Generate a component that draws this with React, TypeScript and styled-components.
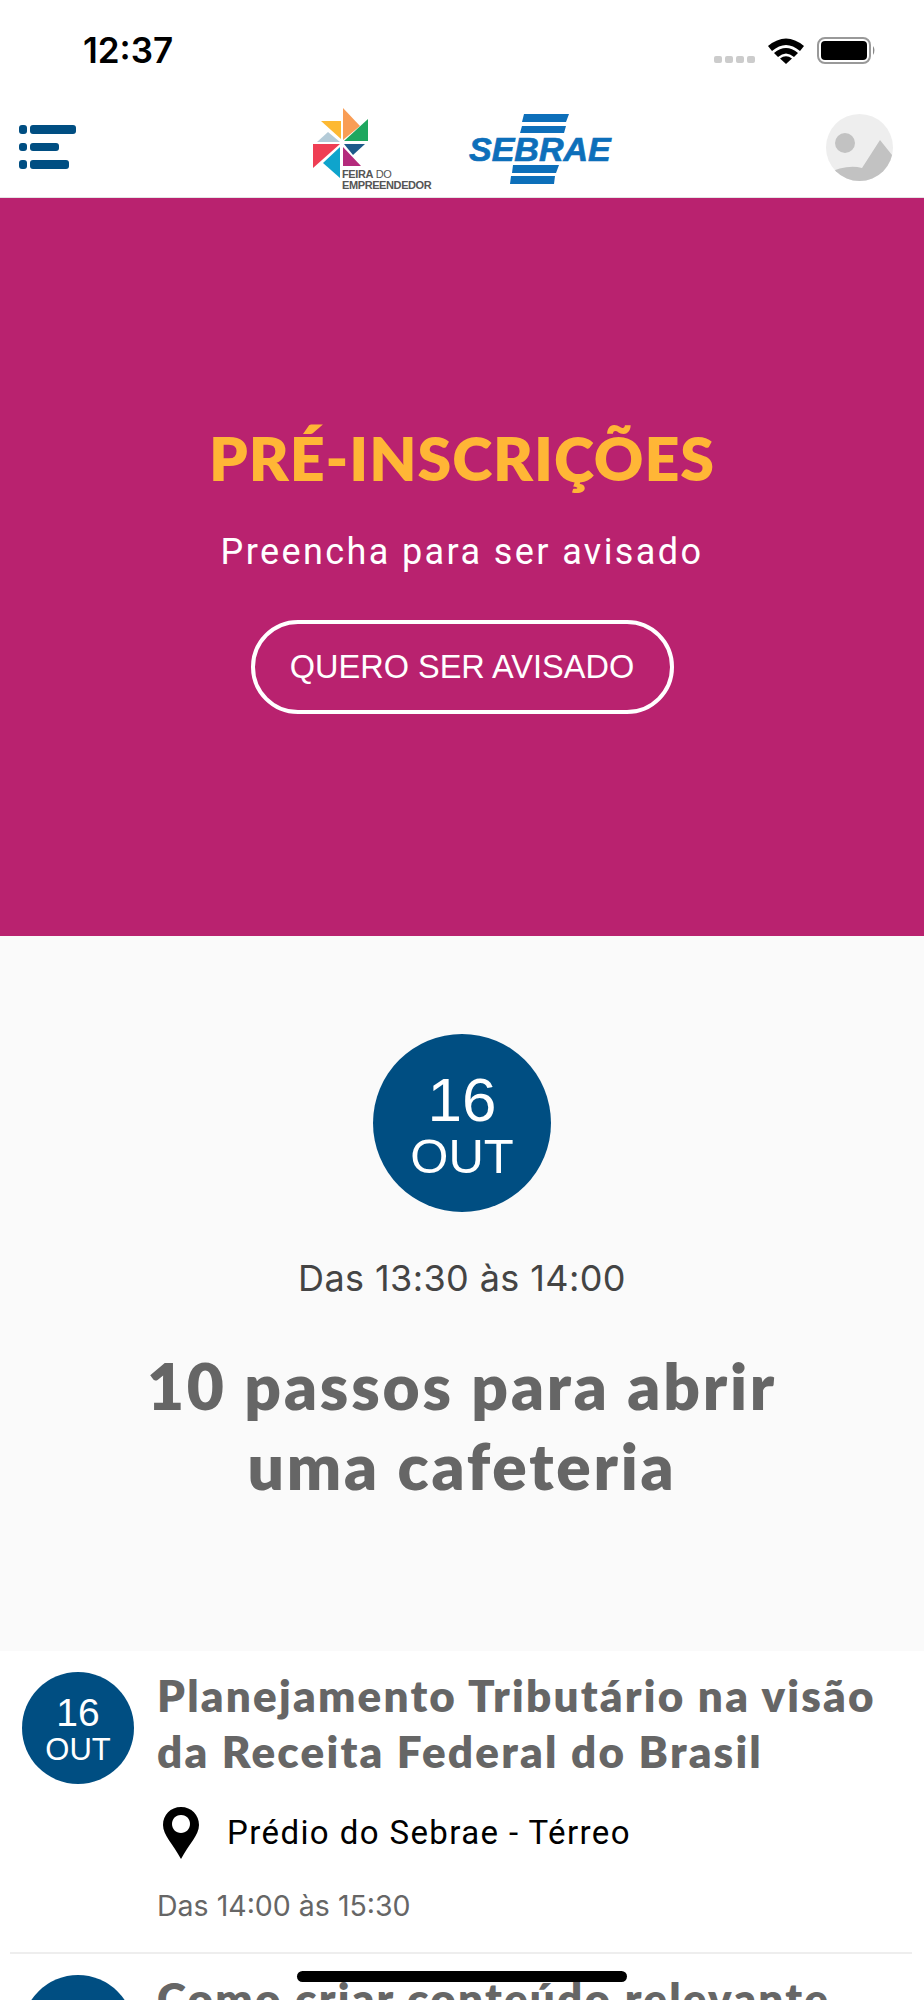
import React from 'react'
import styled, { createGlobalStyle } from "styled-components"

const Global = createGlobalStyle`
    html, body {
        margin:0;
        padding:0;
        background:#fff;
    }
`
const Page = styled.div`
    position:relative;
    width:924px;
    height:2000px;
    overflow:hidden;
    background:#fff;
`
const StatusBar = styled.div`
    height:97px;
    box-sizing:border-box;
    padding:32px 48px 0 83px;
    display:flex;
    justify-content:space-between;
    align-items:flex-start;
`
const Clock = styled.span`
    font-family:"Inter", sans-serif;
    font-size:35px;
    line-height:36px;
    font-weight:600;
    color:#000;
`
const StatusIcons = styled.div`
    display:flex;
    align-items:center;
    margin-top:5px;
`
const Header = styled.header`
    height:101px;
    box-sizing:border-box;
    border-bottom:1px solid #e4e4e4;
    padding:0 31px 0 19px;
    display:flex;
    align-items:center;
    justify-content:space-between;
`
const Logos = styled.div`
    display:flex;
    align-items:center;
    gap:35px;
    margin-left:29px;
    margin-top:5px;
`
const Hero = styled.section`
    height:738px;
    box-sizing:border-box;
    background:#B9226F;
    padding-top:224px;
    display:flex;
    flex-direction:column;
    align-items:center;
`
const HeroTitle = styled.h1`
    margin:0;
    font-family:"Lato", sans-serif;
    font-size:61px;
    line-height:72px;
    font-weight:800;
    letter-spacing:0.9px;
    color:#FFB636;
`
const HeroText = styled.p`
    margin:36px 0 0;
    font-family:"Roboto", sans-serif;
    font-size:36px;
    line-height:44px;
    letter-spacing:2.4px;
    color:#fff;
`
const HeroButton = styled.button`
    margin-top:46px;
    width:423px;
    height:94px;
    box-sizing:border-box;
    border:4px solid #fff;
    border-radius:47px;
    background:transparent;
    color:#fff;
    font-family:"Liberation Sans", sans-serif;
    font-size:32.5px;
    padding:0;
`
const Featured = styled.section`
    height:715px;
    box-sizing:border-box;
    background:#FAFAFA;
    padding-top:98px;
    display:flex;
    flex-direction:column;
    align-items:center;
`
const DateBadge = styled.div<{ small?: boolean }>`
    flex:none;
    width:${(props) => props.small ? "112px" : "178px"};
    height:${(props) => props.small ? "112px" : "178px"};
    box-sizing:border-box;
    padding-top:${(props) => props.small ? "1px" : "5px"};
    border-radius:50%;
    background:#004E82;
    color:#fff;
    font-family:"Liberation Sans", sans-serif;
    display:flex;
    flex-direction:column;
    align-items:center;
    justify-content:center;
`
const BadgeDay = styled.span<{ small?: boolean }>`
    font-size:${(props) => props.small ? "39px" : "62px"};
    line-height:${(props) => props.small ? "41px" : "60px"};
`
const BadgeMonth = styled.span<{ small?: boolean }>`
    font-size:${(props) => props.small ? "31px" : "49px"};
    line-height:${(props) => props.small ? "33px" : "52px"};
`
const FeaturedTime = styled.p`
    margin:44px 0 0;
    font-family:"Inter", sans-serif;
    font-size:36px;
    line-height:44px;
    letter-spacing:0.4px;
    color:#444;
`
const FeaturedTitle = styled.h2`
    margin:46px 0 0;
    font-family:"Lato", sans-serif;
    font-size:64px;
    line-height:80px;
    font-weight:800;
    letter-spacing:2.8px;
    color:#666;
    text-align:center;
`
const List = styled.div`
    padding:0 12px 0 10px;
`
const Row = styled.article`
    display:flex;
    gap:23px;
    padding:21px 0 0 12px;
    & + & {
        border-top:2px solid #eee;
    }
`
const RowBody = styled.div`
    min-width:0;
`
const RowTitle = styled.h3`
    margin:-5px 0 0;
    font-family:"Lato", sans-serif;
    font-size:44px;
    line-height:56px;
    font-weight:800;
    letter-spacing:2.2px;
    color:#666;
    white-space:nowrap;
`
const Place = styled.div`
    display:flex;
    align-items:center;
    gap:28px;
    margin:28px 0 0 6px;
    font-family:"Roboto", sans-serif;
    font-size:33px;
    line-height:52px;
    letter-spacing:1.4px;
    color:#000;
`
const RowTime = styled.p`
    margin:29px 0 28px;
    font-family:"Inter", sans-serif;
    font-size:28.5px;
    line-height:36px;
    color:#666;
`
const HomeBar = styled.div`
    position:absolute;
    left:297px;
    top:1971px;
    width:330px;
    height:11px;
    border-radius:6px;
    background:#000;
`

const Signal = () => (
    <svg width="162" height="28" viewBox="0 0 162 28" style={{display:"block"}}>
        <g fill="#ccc">
            <rect x="0" y="19" width="8" height="7" rx="2" />
            <rect x="11" y="19" width="8" height="7" rx="2" />
            <rect x="22" y="19" width="8" height="7" rx="2" />
            <rect x="33" y="19" width="8" height="7" rx="2" />
        </g>
        <path d="M54 9 Q72 -6 90 9 L86 14 Q72 2 58 14 Z" fill="#000" />
        <path d="M60 16 Q72 6 84 16 L80 20 Q72 13 64 20 Z" fill="#000" />
        <path d="M72 27 L66 21.5 Q72 17 78 21.5 Z" fill="#000" />
        <rect x="104" y="1" width="52" height="25" rx="7" fill="none" stroke="#999" strokeWidth="2" />
        <rect x="107" y="4" width="46" height="19" rx="4" fill="#000" />
        <path d="M159 9 Q162 13 159 18 Z" fill="#888" />
    </svg>
)

const MenuIcon = () => (
    <svg width="57" height="44" viewBox="0 0 57 44">
        <g fill="#004E82">
            <rect x="0" y="0" width="8" height="9" rx="3" />
            <rect x="11" y="0" width="46" height="9" rx="3" />
            <rect x="0" y="18" width="8" height="8" rx="3" />
            <rect x="11" y="18" width="29" height="8" rx="3" />
            <rect x="0" y="35" width="8" height="9" rx="3" />
            <rect x="11" y="35" width="39" height="9" rx="3" />
        </g>
    </svg>
)

const FeiraLogo = () => (
    <svg width="120" height="84" viewBox="0 0 120 84" style={{display:"block"}}>
        <polygon points="30,0 47,18 30,32" fill="#F99D55" />
        <polygon points="8,13 28,13 28,31" fill="#FDB933" />
        <polygon points="55,11 55,33 31,33" fill="#1EA75F" />
        <polygon points="4,34 15,24 27,34" fill="#B4CBD8" />
        <polygon points="0,36 27,36 0,60" fill="#EF3E54" />
        <polygon points="31,36 52,36 40,47" fill="#1D5A8A" />
        <polygon points="27,39 27,70 10,55" fill="#0FA4CC" />
        <polygon points="30,39 48,58 30,58" fill="#B52A7C" />
        <text x="29" y="70" fontFamily="Liberation Sans, sans-serif" fontSize="11" fill="#555" letterSpacing="-0.4"><tspan fontWeight="700">FEIRA</tspan> DO</text>
        <text x="29" y="81" fontFamily="Liberation Sans, sans-serif" fontSize="11" fontWeight="700" fill="#555" letterSpacing="-0.4">EMPREENDEDOR</text>
    </svg>
)

const SebraeLogo = () => (
    <svg width="150" height="72" viewBox="0 0 150 72" style={{display:"block"}}>
        <g fill="#0D6FBA">
            <polygon points="56,0 101,0 98,8 54,8" />
            <polygon points="54,12 98,12 96,19 52,19" />
            <polygon points="45,51 91,51 88,59 44,59" />
            <polygon points="43,62 87,62 86,70 42,70" />
        </g>
        <text x="1" y="47" fontFamily="Liberation Sans, sans-serif" fontSize="34" fontWeight="700" fontStyle="italic" fill="#0D6FBA" stroke="#0D6FBA" strokeWidth="0.7">SEBRAE</text>
    </svg>
)

const Avatar = () => (
    <svg width="67" height="67" viewBox="0 0 67 67" style={{display:"block"}}>
        <defs>
            <clipPath id="avatarClip"><circle cx="33.5" cy="33.5" r="33.5" /></clipPath>
        </defs>
        <circle cx="33.5" cy="33.5" r="33.5" fill="#EEE" />
        <circle cx="19" cy="29" r="10" fill="#C2C2C2" />
        <path d="M0 60 Q20 50 36 54 L54 26 L70 46 V70 H0 Z" fill="#C2C2C2" clipPath="url(#avatarClip)" />
    </svg>
)

const Pin = () => (
    <svg width="36" height="52" viewBox="0 0 36 52" style={{display:"block"}}>
        <path fillRule="evenodd" d="M18 0 C7.5 0 0 8 0 18 C0 28 10 37 18 52 C26 37 36 28 36 18 C36 8 28.5 0 18 0 Z M18 8 C24 8 27 12.5 27 17 C27 22 23 26 18 26 C13 26 9 22 9 17 C9 12.5 12 8 18 8 Z" fill="#000" />
    </svg>
)

const App = () => {
    return (
        <Page>
            <Global />
            <StatusBar>
                <Clock>12:37</Clock>
                <StatusIcons><Signal /></StatusIcons>
            </StatusBar>
            <Header>
                <MenuIcon />
                <Logos>
                    <FeiraLogo />
                    <SebraeLogo />
                </Logos>
                <Avatar />
            </Header>
            <Hero>
                <HeroTitle>PRÉ-INSCRIÇÕES</HeroTitle>
                <HeroText>Preencha para ser avisado</HeroText>
                <HeroButton>QUERO SER AVISADO</HeroButton>
            </Hero>
            <Featured>
                <DateBadge>
                    <BadgeDay>16</BadgeDay>
                    <BadgeMonth>OUT</BadgeMonth>
                </DateBadge>
                <FeaturedTime>Das 13:30 às 14:00</FeaturedTime>
                <FeaturedTitle>10 passos para abrir<br />uma cafeteria</FeaturedTitle>
            </Featured>
            <List>
                <Row>
                    <DateBadge small>
                        <BadgeDay small>16</BadgeDay>
                        <BadgeMonth small>OUT</BadgeMonth>
                    </DateBadge>
                    <RowBody>
                        <RowTitle>Planejamento Tributário na visão<br />da Receita Federal do Brasil</RowTitle>
                        <Place><Pin />Prédio do Sebrae - Térreo</Place>
                        <RowTime>Das 14:00 às 15:30</RowTime>
                    </RowBody>
                </Row>
                <Row>
                    <DateBadge small>
                        <BadgeDay small>16</BadgeDay>
                        <BadgeMonth small>OUT</BadgeMonth>
                    </DateBadge>
                    <RowBody>
                        <RowTitle>Como criar conteúdo relevante</RowTitle>
                    </RowBody>
                </Row>
            </List>
            <HomeBar />
        </Page>
    )
}

export default App
